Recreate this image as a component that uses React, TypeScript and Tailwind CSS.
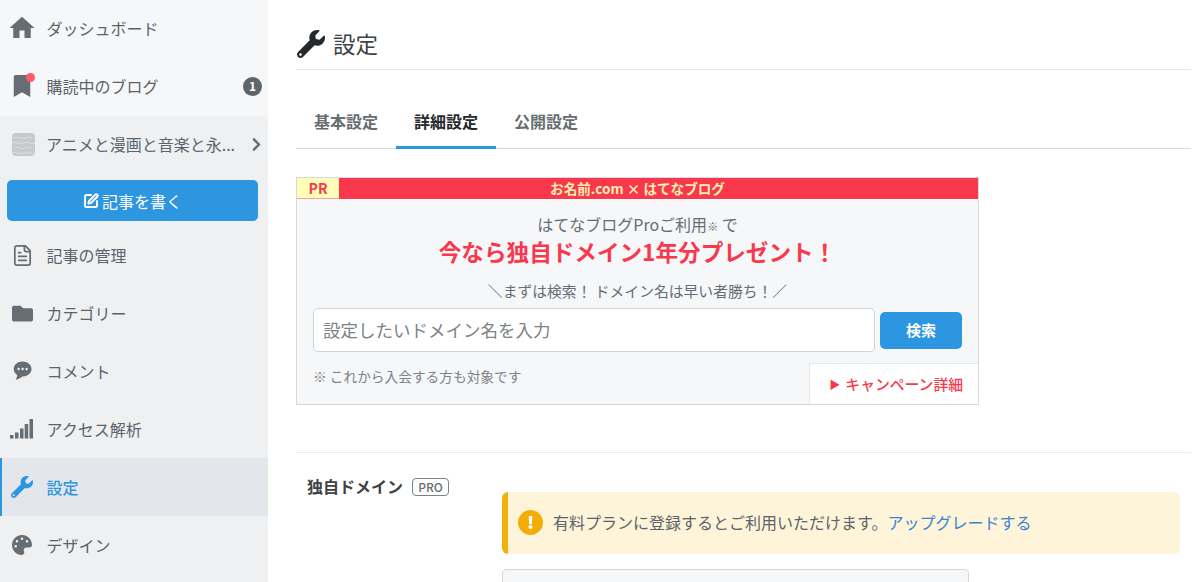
import React from 'react';
import { FaBookmark, FaChevronRight, FaFolder, FaWrench, FaPalette, FaExclamation } from 'react-icons/fa';
import { MdHome } from 'react-icons/md';
import { LuFileText, LuSquarePen } from 'react-icons/lu';

function SignalIcon() {
  return (
    <svg width="24" height="20" viewBox="0 0 24 20" fill="#666d73">
      <rect x="0" y="16" width="3.5" height="3.5" />
      <rect x="5" y="13.5" width="3.5" height="6" />
      <rect x="10" y="9.5" width="3.5" height="10" />
      <rect x="14.7" y="5" width="3.5" height="14.5" />
      <rect x="19.5" y="0" width="3.5" height="19.5" />
    </svg>
  );
}

function CommentIcon() {
  return (
    <svg width="19" height="20" viewBox="0 0 19 20">
      <path d="M9.5 0.5C4.5 0.5 0.7 3.8 0.7 8c0 2.6 1.4 4.7 3.6 6.1-.1 1.5-.8 3.2-1.7 4.6 2.6-.5 5-1.7 6.9-3.2 5 0 9-3.2 9-7.5S14.5.5 9.5.5z" fill="#666d73" />
      <circle cx="5.6" cy="8" r="1.2" fill="#eef0f2" />
      <circle cx="9.6" cy="8" r="1.2" fill="#eef0f2" />
      <circle cx="13.6" cy="8" r="1.2" fill="#eef0f2" />
    </svg>
  );
}

function Thumb() {
  return (
    <svg width="23" height="23" viewBox="0 0 23 23" className="rounded-sm">
      <rect width="23" height="23" fill="#c6cacd" />
      <path d="M2 5q3-1.500 6 0t6 0 6 0M0 10q3-1.500 6 0t6 0 6 0 5 0M2 15q3-1.500 6 0t6 0 6 0M0 20q3-1.500 6 0t6 0 6 0 5 0" stroke="#d8dbdd" strokeWidth="1.2" fill="none" />
    </svg>
  );
}

function NavItem({ icon, label, active, badge, dot, top }: { icon: React.ReactNode; label: string; active?: boolean; badge?: string; dot?: boolean; top?: boolean }) {
  return (
    <div className={`h-[58px] flex items-center pr-[6px] ${top ? 'pb-[2px]' : ''} ${active ? 'bg-[#e3e6ea] border-l-2 border-[#2d96e0] pl-[8px] text-[#2d96e0] font-medium' : 'pl-[10px] text-[#5c6369]'}`}>
      <div className={`relative w-[24px] h-[24px] flex items-center justify-center shrink-0 ${active ? 'text-[#2d96e0]' : 'text-[#666d73]'}`}>
        {icon}
        {dot && <span className="absolute -top-[1px] -right-[1px] w-[9px] h-[9px] rounded-full bg-[#ff5b66]" />}
      </div>
      <span className="ml-[12.5px] text-[16px] flex-1">{label}</span>
      {badge && (
        <span className="w-[19px] h-[19px] rounded-full bg-[#5f6569] text-white text-[12px] font-bold flex items-center justify-center">{badge}</span>
      )}
    </div>
  );
}

function Sidebar() {
  return (
    <aside className="w-[268px] shrink-0 bg-[#eef0f2]">
      <div className="bg-[#f6f7f9] h-[116px]">
        <NavItem icon={<MdHome size={30} className="shrink-0" />} label="ダッシュボード" top />
        <NavItem icon={<FaBookmark size={22} />} label="購読中のブログ" badge="1" dot top />
      </div>
      <div className="h-[58px] flex items-center pl-[12px] pr-[4px] pb-[2px] text-[#5c6369]">
        <Thumb />
        <span className="ml-[11px] text-[16px] flex-1 whitespace-nowrap">アニメと漫画と音楽と永...</span>
        <FaChevronRight size={15} className="text-[#666d73]" />
      </div>
      <div className="pl-[7px] pr-[10px] mt-[6px] mb-[5px]">
        <button className="w-full h-[41px] rounded-[5px] bg-[#2d96e0] text-white text-[16px] flex items-center justify-center gap-[3px]">
          <LuSquarePen size={16} strokeWidth={2.8} />
          記事を書く
        </button>
      </div>
      <NavItem icon={<LuFileText size={23} strokeWidth={1.8} />} label="記事の管理" />
      <NavItem icon={<FaFolder size={21} />} label="カテゴリー" />
      <NavItem icon={<CommentIcon />} label="コメント" />
      <NavItem icon={<SignalIcon />} label="アクセス解析" />
      <NavItem icon={<FaWrench size={22} />} label="設定" active />
      <NavItem icon={<FaPalette size={20} />} label="デザイン" />
    </aside>
  );
}

function Ad() {
  return (
    <div className="w-[683px] h-[228px] mt-[28px] bg-[#f6f7f9] border border-[#d3dbdf]">
      <div className="relative h-[21px] bg-[#f8394d] flex items-center justify-center text-[13.6px] font-bold text-[#ffeeb0]">
        <span className="absolute left-0 top-0 w-[42px] h-[21px] bg-[#fffdb8] border-b border-[#f9a0a0] flex items-center justify-center text-[#f8394d] text-[14px]">PR</span>
        お名前.com × はてなブログ
      </div>
      <p className="mt-[15px] text-center text-[16px] leading-[20px] text-[#666d73]">はてなブログProご利用<span className="text-[11px]">※</span> で</p>
      <p className="text-center text-[22.6px] leading-[30px] mt-[1px] font-bold text-[#f8394d]">今なら独自ドメイン1年分プレゼント！</p>
      <p className="mt-[14px] text-center text-[14.8px] leading-[20px] text-[#666d73]">＼まずは検索！ ドメイン名は早い者勝ち！／</p>
      <div className="flex items-center pl-[16px] mt-[7px]">
        <div className="w-[562px] h-[44px] rounded-[5px] bg-white border border-[#ccd6da] flex items-center px-[9px] text-[17.5px] text-[#7c8286]">設定したいドメイン名を入力</div>
        <button className="ml-[5px] w-[82px] h-[37px] rounded-[5px] bg-[#2d96e0] text-white text-[15px] font-bold">検索</button>
      </div>
      <div className="flex justify-between mt-[11px]">
        <span className="ml-[16px] mt-[2px] text-[13.7px] leading-[22px] text-[#7c8286]">※ これから入会する方も対象です</span>
        <a className="w-[169px] h-[41px] bg-white border-l border-t border-[#e3e8eb] flex items-center justify-end pr-[15px] gap-[5px] text-[14.8px] font-medium text-[#f8394d]">
          <span className="text-[11px]">▶</span>キャンペーン詳細
        </a>
      </div>
    </div>
  );
}

export default function App() {
  return (
    <div className="flex h-[582px] overflow-hidden bg-white" style={{ fontFamily: '"Noto Sans CJK JP", "Noto Sans", sans-serif' }}>
      <Sidebar />
      <main className="ml-[28px] w-[895px] shrink-0">
        <div className="h-[70px] border-b border-[#e3e8eb] flex items-center pt-[18px] pl-[1px]">
          <FaWrench size={28} className="text-[#25292c]" />
          <h1 className="ml-[8px] text-[22.5px] font-normal text-[#3d4245]">設定</h1>
        </div>
        <div className="mt-[35px] h-[44px] border-b border-[#d3dbdf] flex text-[16px] font-bold text-[#666d73]">
          <div className="w-[100px] text-center pt-[4px]">基本設定</div>
          <div className="w-[100px] h-[44px] text-center pt-[4px] text-[#25292c] border-b-[3px] border-[#2d96e0]">詳細設定</div>
          <div className="w-[100px] text-center pt-[4px]">公開設定</div>
        </div>
        <Ad />
        <div className="mt-[47px] border-t border-[#e8ecee] flex">
          <div className="w-[206px] pl-[11px] pt-[23px] flex items-start">
            <span className="text-[16px] leading-[20px] font-bold text-[#3d4245]">独自ドメイン</span>
            <span className="ml-[9px] mt-[2px] w-[37px] h-[18px] rounded-[4px] border-[1.5px] border-[#7c8286] text-[12px] font-medium text-[#666d73] flex items-center justify-center">PRO</span>
          </div>
          <div className="pt-[39px]">
            <div className="w-[678px] h-[62px] rounded-[6px] bg-[#fdf4d9] border-l-[6px] border-[#f2b10a] flex items-center pl-[10px] pb-[2px] text-[16px] text-[#5c6369]">
              <span className="w-[25px] h-[25px] rounded-full bg-[#f2ad09] text-white flex items-center justify-center">
                <FaExclamation size={13} />
              </span>
              <span className="ml-[10px]">有料プランに登録するとご利用いただけます。<a className="text-[#3a83d0]">アップグレードする</a></span>
            </div>
            <div className="mt-[15px] w-[467px] h-[40px] rounded-[4px] bg-[#f5f7f9] border border-[#d3dbdf]" />
          </div>
        </div>
      </main>
    </div>
  );
}
